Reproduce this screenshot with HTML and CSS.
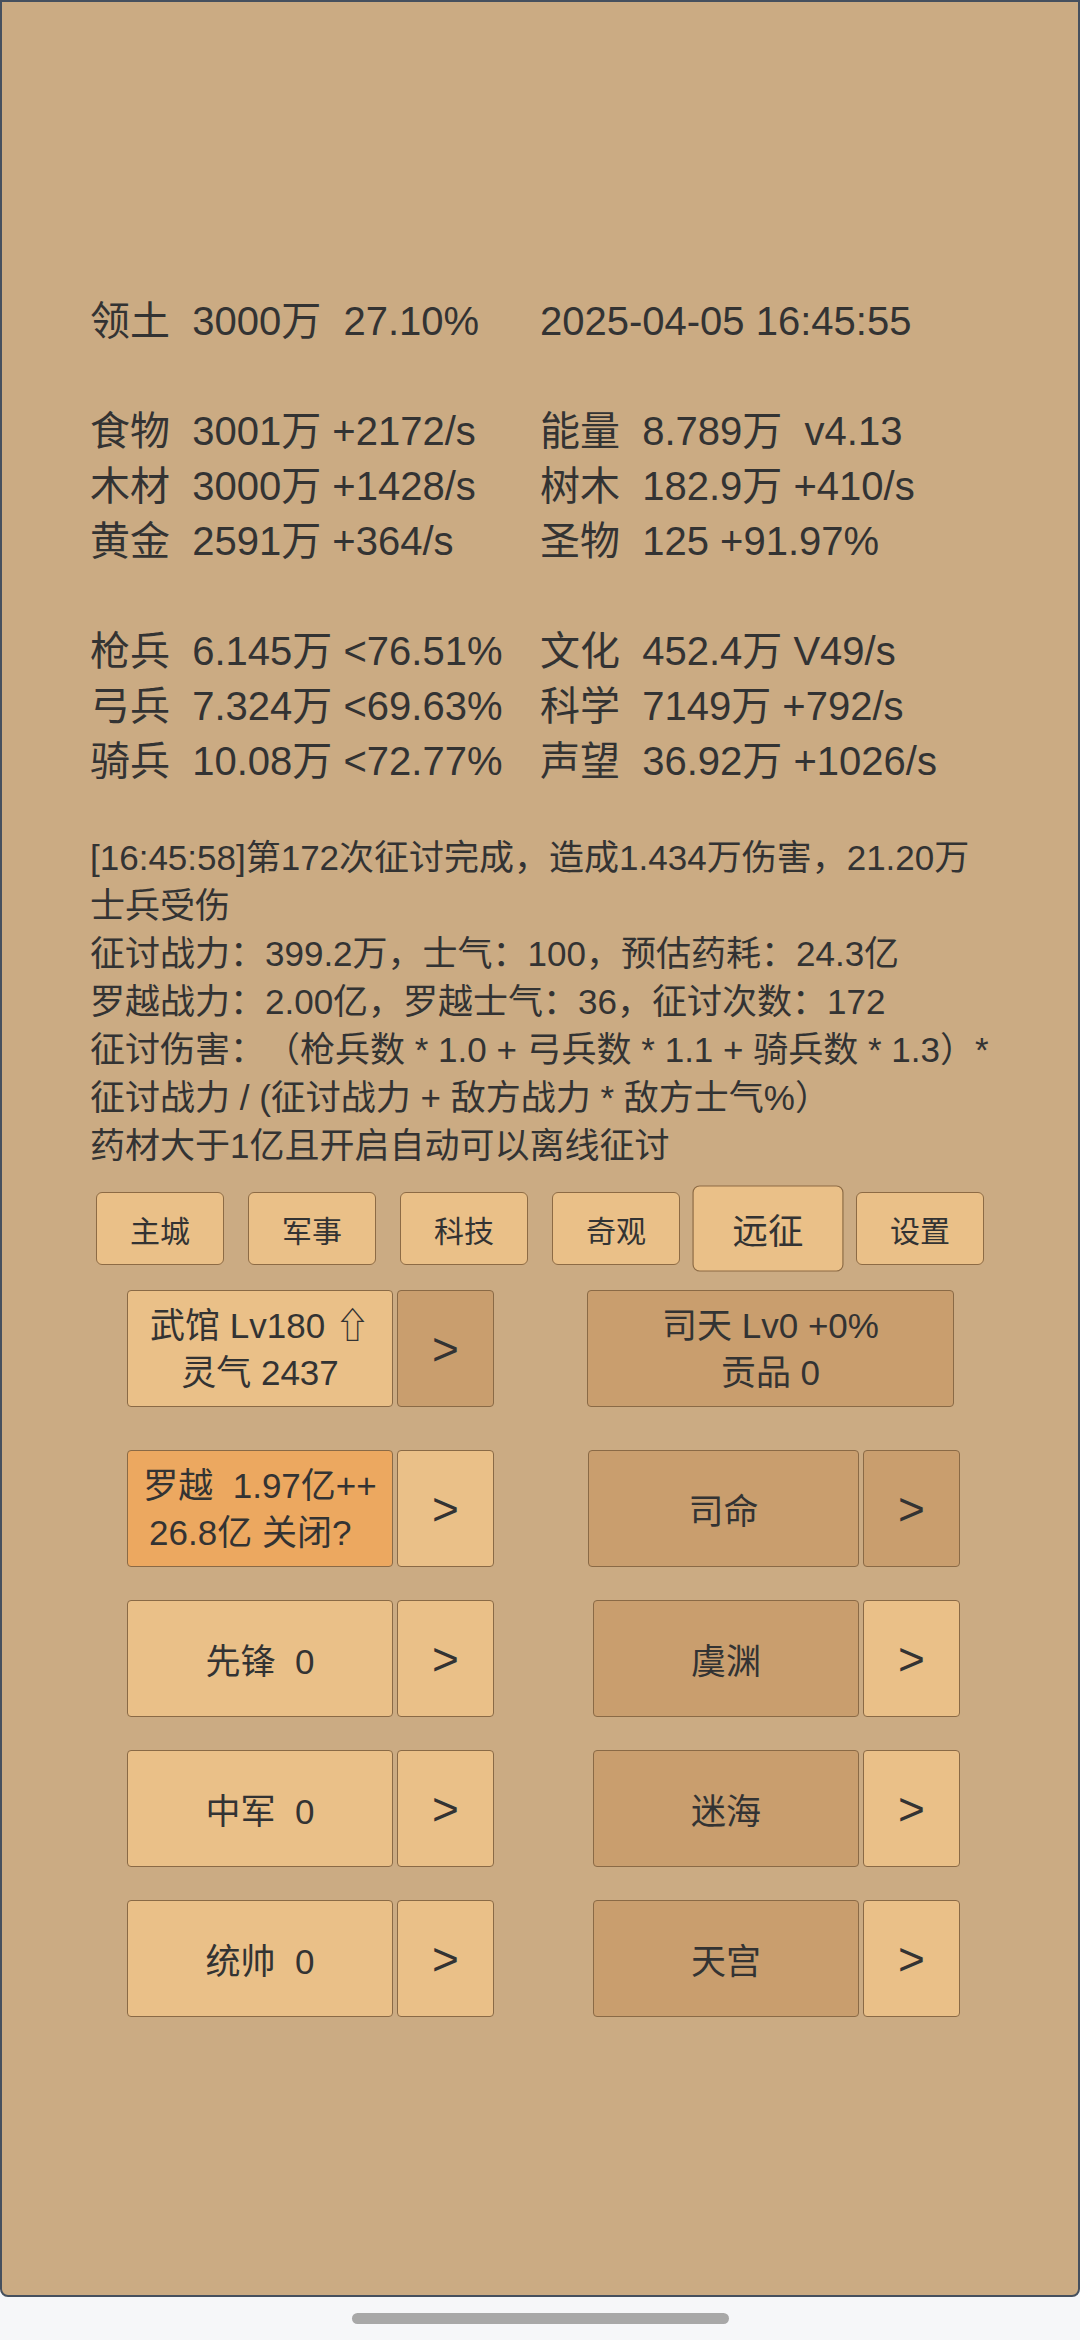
FILE: index.html
```html
<!DOCTYPE html>
<html lang="zh">
<head>
<meta charset="utf-8">
<title>远征</title>
<link rel="stylesheet" href="styles.css">
</head>
<body>
<div class="frame">
  <div class="stats">
    <div class="stat-row"><span class="cell">领土  3000万  27.10%</span><span class="cell">2025-04-05 16:45:55</span></div>
    <div class="blank"></div>
    <div class="stat-row"><span class="cell">食物  3001万 +2172/s</span><span class="cell">能量  8.789万  v4.13</span></div>
    <div class="stat-row"><span class="cell">木材  3000万 +1428/s</span><span class="cell">树木  182.9万 +410/s</span></div>
    <div class="stat-row"><span class="cell">黄金  2591万 +364/s</span><span class="cell">圣物  125 +91.97%</span></div>
    <div class="blank"></div>
    <div class="stat-row"><span class="cell">枪兵  6.145万 &lt;76.51%</span><span class="cell">文化  452.4万 V49/s</span></div>
    <div class="stat-row"><span class="cell">弓兵  7.324万 &lt;69.63%</span><span class="cell">科学  7149万 +792/s</span></div>
    <div class="stat-row"><span class="cell">骑兵  10.08万 &lt;72.77%</span><span class="cell">声望  36.92万 +1026/s</span></div>
  </div>

  <div class="log">
    <div class="log-line">[16:45:58]第172次征讨完成，造成1.434万伤害，21.20万</div>
    <div class="log-line">士兵受伤</div>
    <div class="log-line">征讨战力：399.2万，士气：100，预估药耗：24.3亿</div>
    <div class="log-line">罗越战力：2.00亿，罗越士气：36，征讨次数：172</div>
    <div class="log-line">征讨伤害：（枪兵数 * 1.0 + 弓兵数 * 1.1 + 骑兵数 * 1.3）*</div>
    <div class="log-line">征讨战力 / (征讨战力 + 敌方战力 * 敌方士气%）</div>
    <div class="log-line">药材大于1亿且开启自动可以离线征讨</div>
  </div>

  <div class="tabs">
    <div class="tab">主城</div>
    <div class="tab">军事</div>
    <div class="tab">科技</div>
    <div class="tab">奇观</div>
    <div class="tab active">远征</div>
    <div class="tab">设置</div>
  </div>

  <div class="buildings">
    <div class="brow first">
      <div class="group">
        <div class="box main light two">武馆 Lv180 ⇧<br>灵气 2437</div>
        <div class="box arrow dark">&gt;</div>
      </div>
      <div class="group right r1">
        <div class="box wide dark two">司天 Lv0 +0%<br>贡品 0</div>
      </div>
    </div>
    <div class="brow r2row">
      <div class="group">
        <div class="box main orange two pre">罗越  1.97亿++<br>26.8亿 关闭?  </div>
        <div class="box arrow light">&gt;</div>
      </div>
      <div class="group right r2">
        <div class="box main wider dark">司命</div>
        <div class="box arrow dark">&gt;</div>
      </div>
    </div>
    <div class="brow">
      <div class="group">
        <div class="box main light pre">先锋  0</div>
        <div class="box arrow light">&gt;</div>
      </div>
      <div class="group right">
        <div class="box main dark">虞渊</div>
        <div class="box arrow light">&gt;</div>
      </div>
    </div>
    <div class="brow">
      <div class="group">
        <div class="box main light pre">中军  0</div>
        <div class="box arrow light">&gt;</div>
      </div>
      <div class="group right">
        <div class="box main dark">迷海</div>
        <div class="box arrow light">&gt;</div>
      </div>
    </div>
    <div class="brow">
      <div class="group">
        <div class="box main light pre">统帅  0</div>
        <div class="box arrow light">&gt;</div>
      </div>
      <div class="group right">
        <div class="box main dark">天宫</div>
        <div class="box arrow light">&gt;</div>
      </div>
    </div>
  </div>
</div>
<div class="navbar"><div class="home-bar"></div></div>
</body>
</html>
```

FILE: styles.css
```css
html, body {
  margin: 0;
  padding: 0;
}

body {
  width: 1080px;
  height: 2340px;
  background: #f6f7f9;
  font-family: "Liberation Sans", "Noto Sans CJK SC", sans-serif;
  color: #333333;
  overflow: hidden;
  text-spacing-trim: space-all;
}

.frame {
  box-sizing: border-box;
  width: 1080px;
  height: 2297px;
  background: #cbab83;
  border: 2px solid #46505e;
  border-radius: 0 0 8px 8px;
  padding: 0 88px;
}

.stats {
  padding-top: 292px;
  font-size: 40px;
  line-height: 55px;
}

.stat-row {
  display: grid;
  grid-template-columns: 450px 450px;
}

.cell {
  white-space: pre;
}

.blank {
  height: 55px;
}

.log {
  margin-top: 45px;
  font-size: 35px;
  line-height: 48px;
}

.log-line {
  white-space: nowrap;
}

.tabs {
  margin-top: 22px;
  display: flex;
  justify-content: center;
  gap: 24px;
}

.tab {
  box-sizing: border-box;
  width: 128px;
  height: 73px;
  background: #eac088;
  border: 1px solid #8d6b45;
  border-radius: 6px;
  font-size: 30px;
  display: flex;
  align-items: center;
  justify-content: center;
}

.tab.active {
  transform: scale(1.18);
}

.buildings {
  margin-top: 25px;
}

.brow {
  display: flex;
  height: 117px;
  margin-top: 33px;
  padding-left: 37px;
}

.brow.first {
  margin-top: 0;
}

.brow.r2row {
  margin-top: 43px;
}

.group {
  display: flex;
  gap: 4px;
}

.group.right {
  margin-left: 99px;
}

.group.right.r1 {
  margin-left: 93px;
}

.group.right.r2 {
  margin-left: 94px;
}

.box {
  box-sizing: border-box;
  height: 117px;
  border: 1px solid #8a6a46;
  border-radius: 4px;
  font-size: 35px;
  display: flex;
  align-items: center;
  justify-content: center;
  text-align: center;
}

.box.two {
  line-height: 47px;
}

.box.pre {
  white-space: pre;
}

.main {
  width: 266px;
}

.main.wider {
  width: 271px;
}

.wide {
  width: 367px;
}

.arrow {
  width: 97px;
  font-size: 46px;
}

.light {
  background: #eac088;
}

.dark {
  background: #c99e6e;
}

.orange {
  background: #eca860;
}

.navbar {
  height: 43px;
  display: flex;
  justify-content: center;
}

.home-bar {
  margin-top: 16px;
  width: 377px;
  height: 11px;
  border-radius: 6px;
  background: #a8a8a8;
}
```
